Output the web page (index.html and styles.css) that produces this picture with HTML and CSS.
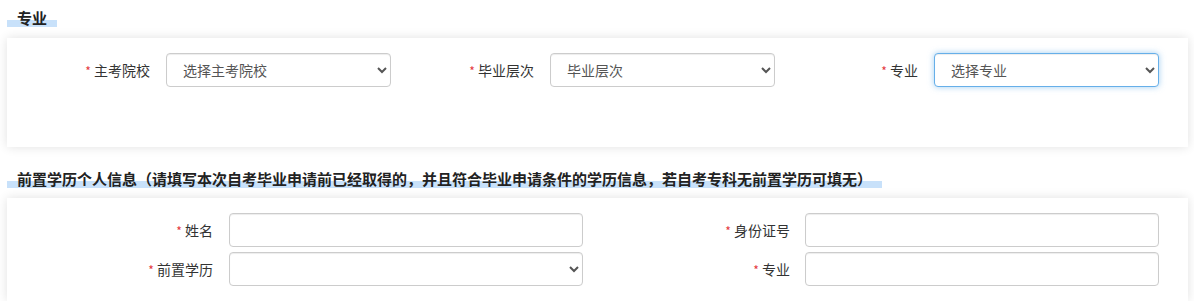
FILE: index.html
```html
<!DOCTYPE html>
<html lang="zh-CN">
<head>
<meta charset="utf-8">
<title>专业</title>
<link rel="stylesheet" href="styles.css">
</head>
<body>
<div class="page">
  <div class="section-head"><span class="section-title">专业</span></div>
  <div class="card card-major">
    <div class="grid3">
      <div class="field">
        <label class="field-label"><span class="req">*</span> 主考院校</label>
        <select class="control"><option>选择主考院校</option></select>
      </div>
      <div class="field">
        <label class="field-label"><span class="req">*</span> 毕业层次</label>
        <select class="control"><option>毕业层次</option></select>
      </div>
      <div class="field">
        <label class="field-label"><span class="req">*</span> 专业</label>
        <select class="control focused"><option>选择专业</option></select>
      </div>
    </div>
  </div>

  <div class="section-head head2"><span class="section-title">前置学历个人信息（请填写本次自考毕业申请前已经取得的，并且符合毕业申请条件的学历信息，若自考专科无前置学历可填无）</span></div>
  <div class="card card-info">
    <div class="grid2">
      <div class="field wide">
        <label class="field-label"><span class="req">*</span> 姓名</label>
        <input class="control" type="text">
      </div>
      <div class="field wide right">
        <label class="field-label"><span class="req">*</span> 身份证号</label>
        <input class="control" type="text">
      </div>
      <div class="field wide">
        <label class="field-label"><span class="req">*</span> 前置学历</label>
        <select class="control"><option></option></select>
      </div>
      <div class="field wide right">
        <label class="field-label"><span class="req">*</span> 专业</label>
        <input class="control" type="text">
      </div>
    </div>
  </div>
</div>
</body>
</html>
```
FILE: styles.css
```css
html, body {
  margin: 0;
  padding: 0;
  background: #fff;
}
body {
  font-family: "Noto Sans CJK SC", "Noto Sans", "Liberation Sans", sans-serif;
  font-size: 14px;
  color: #333;
}
.page {
  padding: 0 6px 0 7px;
}
.section-head {
  padding-top: 8px;
  height: 18px;
  margin-bottom: 12px;
}
.head2 {
  padding-top: 0;
  margin-top: 22px;
  margin-bottom: 11px;
}
.section-title {
  display: inline-block;
  font-size: 15px;
  font-weight: bold;
  line-height: 18px;
  height: 18px;
  padding: 0 10px;
  color: #222;
  background: linear-gradient(to bottom, transparent 11px, #c8e1fa 11px);
}
.card {
  background: #fff;
  box-shadow: 0 0 10px rgba(0, 0, 0, 0.12);
  padding: 15px 14px 15px 15px;
}
.card-major {
  padding-bottom: 60px;
}
.grid3 {
  display: grid;
  grid-template-columns: repeat(3, 384px);
}
.grid2 {
  display: grid;
  grid-template-columns: repeat(2, 576px);
  row-gap: 5px;
}
.field {
  display: flex;
  align-items: center;
  padding-right: 15px;
}
.field-label {
  width: 128px;
  flex: none;
  text-align: right;
  margin-right: 16px;
  white-space: nowrap;
}
.field.wide .field-label {
  width: 191px;
}
.field.wide.right .field-label {
  width: 192px;
  margin-right: 15px;
}
.req {
  color: #e4393c;
  font-size: 12px;
}
.control {
  flex: 1;
  min-width: 0;
  height: 34px;
  box-sizing: border-box;
  border: 1px solid #ccc;
  border-radius: 4px;
  background-color: #fff;
  font-family: inherit;
  font-size: 14px;
  color: #555;
  padding: 0 12px;
  box-shadow: inset 0 1px 1px rgba(0, 0, 0, 0.075);
  outline: none;
}
select.control {
  padding-left: 12px;
}
.control.focused {
  border-color: #66afe9;
  box-shadow: inset 0 1px 1px rgba(0, 0, 0, 0.075), 0 0 6px rgba(102, 175, 233, 0.6);
}
```
